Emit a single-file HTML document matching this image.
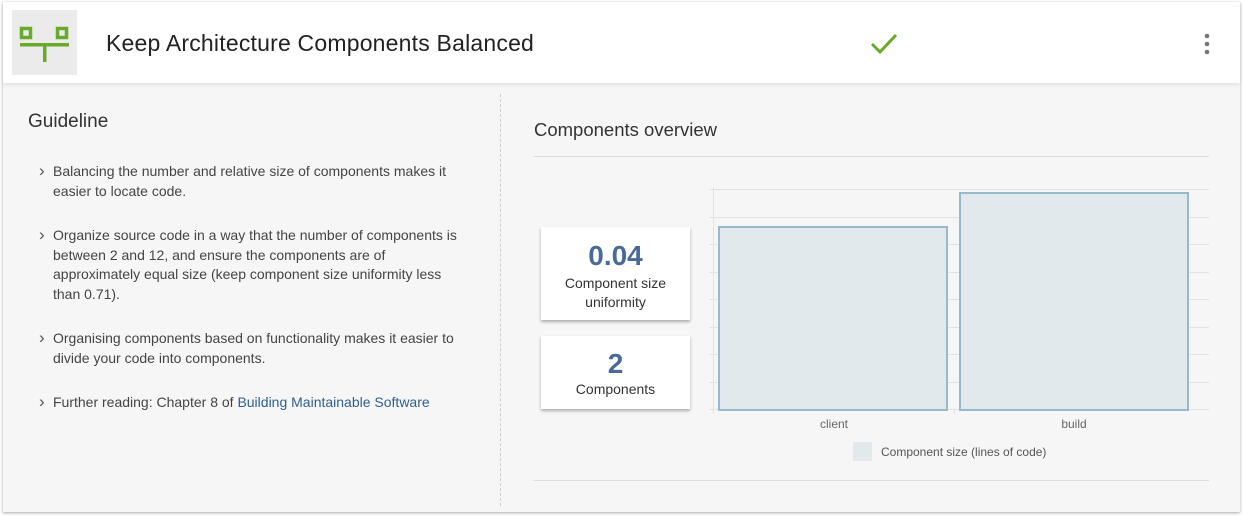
<!DOCTYPE html><html><head><style>
body{margin:0;width:1244px;height:516px;background:#fff;font-family:"Liberation Sans",sans-serif;overflow:hidden;position:relative}
.card{position:absolute;left:3px;top:2px;width:1237px;height:510px;background:#f6f6f6;box-shadow:0 1px 3px rgba(0,0,0,.35)}
.hdr{position:absolute;left:0;top:0;width:1237px;height:81px;background:#fff;box-shadow:0 2px 4px rgba(0,0,0,.08)}
.logo{position:absolute;left:9px;top:8px;width:65px;height:65px;background:#ebebeb}
.title{position:absolute;left:103px;top:28px;font-size:23px;color:#222;letter-spacing:.2px}
.g{position:absolute;left:25px;top:109px;font-size:19px;color:#333}
ul{position:absolute;left:36px;top:160px;width:428px;margin:0;padding:0;list-style:none;font-size:14px;color:#444;line-height:19.5px}
li{position:relative;padding-left:14px;margin-bottom:25px}
li:before{content:"›";position:absolute;left:0;top:-1px;font-size:17px;color:#555}
a{color:#2f5f8f;text-decoration:none}
.div{position:absolute;left:497px;top:92px;height:412px;border-left:1px dashed #ccc}
.co{position:absolute;left:531px;top:117px;font-size:18.5px;color:#333}
.hr{position:absolute;left:530px;width:676px;border-top:1px solid #ddd}
.box{position:absolute;left:538px;width:149px;background:#fff;box-shadow:0 2px 3px rgba(0,0,0,.3);text-align:center;color:#333;font-size:14px}
.box b{display:block;color:#4a6a9a;font-size:28px}
</style></head><body><div class="card">
<div class="hdr">
<div class="logo"><svg width="65" height="65"><g fill="none" stroke="#6aaa2a" stroke-width="3.5"><rect x="9.5" y="18.5" width="9" height="9"/><rect x="45.5" y="18.5" width="9" height="9"/></g><rect x="8" y="33" width="49" height="3.5" fill="#6aaa2a"/><rect x="31" y="35" width="3.5" height="17" fill="#6aaa2a"/></svg></div>
<div class="title">Keep Architecture Components Balanced</div>
<svg style="position:absolute;left:866px;top:30px" width="30" height="24"><path d="M3 12 L11 20 L27 3" fill="none" stroke="#6aaa2a" stroke-width="3"/></svg>
<svg style="position:absolute;left:1199px;top:31px" width="10" height="24"><circle cx="5" cy="3" r="2.3" fill="#777"/><circle cx="5" cy="11" r="2.3" fill="#777"/><circle cx="5" cy="19" r="2.3" fill="#777"/></svg>
</div>
<div class="g">Guideline</div>
<ul>
<li>Balancing the number and relative size of components makes it easier to locate code.</li>
<li>Organize source code in a way that the number of components is between 2 and 12, and ensure the components are of approximately equal size (keep component size uniformity less than 0.71).</li>
<li>Organising components based on functionality makes it easier to divide your code into components.</li>
<li>Further reading: Chapter 8 of <a>Building Maintainable Software</a></li>
</ul>
<div class="div"></div>
<div class="co">Components overview</div>
<div class="hr" style="top:154px"></div>
<div class="hr" style="top:478px"></div>
<div class="box" style="top:225px;height:93px"><b style="margin-top:11px;line-height:36px">0.04</b><div style="line-height:19px">Component size<br>uniformity</div></div>
<div class="box" style="top:334px;height:73px"><b style="margin-top:11px;line-height:34px">2</b><div>Components</div></div>
<svg style="position:absolute;left:700px;top:180px" width="510" height="250">
<g stroke="#e2e2e2" stroke-width="1">
<line x1="6" y1="7.5" x2="506" y2="7.5"/><line x1="6" y1="35.5" x2="506" y2="35.5"/><line x1="6" y1="62.5" x2="506" y2="62.5"/><line x1="6" y1="90.5" x2="506" y2="90.5"/><line x1="6" y1="117.5" x2="506" y2="117.5"/><line x1="6" y1="145.5" x2="506" y2="145.5"/><line x1="6" y1="172.5" x2="506" y2="172.5"/><line x1="6" y1="200.5" x2="506" y2="200.5"/><line x1="6" y1="227.5" x2="506" y2="227.5"/>
<line x1="10.5" y1="5" x2="10.5" y2="232"/><line x1="251.5" y1="227" x2="251.5" y2="232"/>
</g>
<rect x="16" y="45" width="228" height="183" fill="#e2e9ed" stroke="#97b9cc" stroke-width="2"/>
<rect x="257" y="11" width="228" height="217" fill="#e2e9ed" stroke="#97b9cc" stroke-width="2"/>
<text x="131" y="246" font-size="12" fill="#666" text-anchor="middle" font-family="Liberation Sans">client</text>
<text x="371" y="246" font-size="12" fill="#666" text-anchor="middle" font-family="Liberation Sans">build</text>
</svg>
<div style="position:absolute;left:850px;top:440px;width:19px;height:19px;background:#e2e9ed"></div>
<div style="position:absolute;left:878px;top:443px;font-size:12px;color:#555">Component size (lines of code)</div>
</div></body></html>
